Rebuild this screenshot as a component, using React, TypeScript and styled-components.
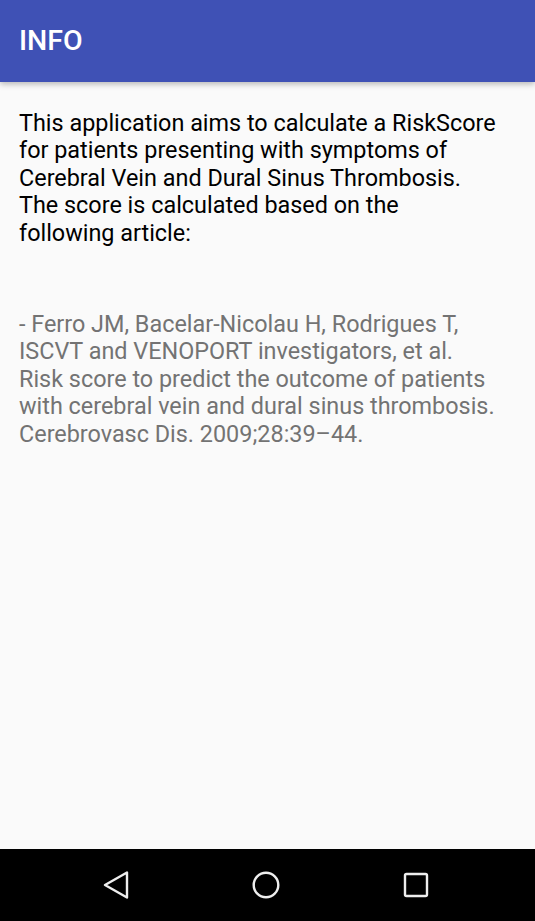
import React from "react";
import styled, { createGlobalStyle } from "styled-components";

const GlobalStyle = createGlobalStyle`
  html, body {
    margin: 0;
    padding: 0;
    height: 100%;
    background: #FAFAFA;
  }
  #root {
    height: 100%;
  }
`;

const Screen = styled.div`
  height: 921px;
  display: flex;
  flex-direction: column;
  background: #FAFAFA;
  font-family: Roboto, "Liberation Sans", sans-serif;
  overflow: hidden;
`;

const Toolbar = styled.header`
  height: 80px;
  flex-shrink: 0;
  background: #3F51B5;
  display: flex;
  align-items: center;
  padding: 0 19px 2px;
  box-shadow: 0 2px 6px rgba(0, 0, 0, 0.28);
  position: relative;
  z-index: 1;

  > h1 {
    margin: 0;
    color: #FFFFFF;
    font-size: 28.5px;
    font-weight: 500;
  }
`;

const Content = styled.main`
  flex-grow: 1;
  padding: 28px 35px 0 19px;
`;

const Paragraph = styled.p<{ muted?: boolean }>`
  margin: 0 0 ${(p) => (p.muted ? "0" : "64px")};
  font-size: 23.4px;
  line-height: 27.4px;
  color: ${(p) => (p.muted ? "#737373" : "#000000")};
`;

const NavBar = styled.nav`
  height: 72px;
  flex-shrink: 0;
  background: #000000;
  display: flex;
  justify-content: center;
  align-items: center;
  gap: 122px;
  padding-right: 4px;

  > svg {
    display: block;
  }
`;

const App = () => {
  return (
    <>
      <GlobalStyle />
      <Screen>
        <Toolbar>
          <h1>INFO</h1>
        </Toolbar>
        <Content>
          <Paragraph>
            This application aims to calculate a RiskScore for patients presenting with symptoms of
            Cerebral Vein and Dural Sinus Thrombosis. The score is calculated based on the
            following article:
          </Paragraph>
          <Paragraph muted>
            - Ferro JM, Bacelar-Nicolau H, Rodrigues T, ISCVT and VENOPORT investigators, et al.
            Risk score to predict the outcome of patients with cerebral vein and dural sinus
            thrombosis. Cerebrovasc Dis. 2009;28:39–44.
          </Paragraph>
        </Content>
        <NavBar>
          <svg width="28" height="28" viewBox="0 0 28 28">
            <path
              d="M25 1.5 L25 26.5 L3 14 Z"
              fill="none"
              stroke="#EEEEEE"
              strokeWidth="2.4"
              strokeLinejoin="round"
            />
          </svg>
          <svg width="28" height="28" viewBox="0 0 28 28">
            <circle cx="14" cy="14" r="12.3" fill="none" stroke="#EEEEEE" strokeWidth="2.4" />
          </svg>
          <svg width="28" height="28" viewBox="0 0 28 28">
            <rect
              x="3"
              y="3"
              width="22"
              height="22"
              rx="1.5"
              fill="none"
              stroke="#EEEEEE"
              strokeWidth="2.4"
            />
          </svg>
        </NavBar>
      </Screen>
    </>
  );
};

export default App;
